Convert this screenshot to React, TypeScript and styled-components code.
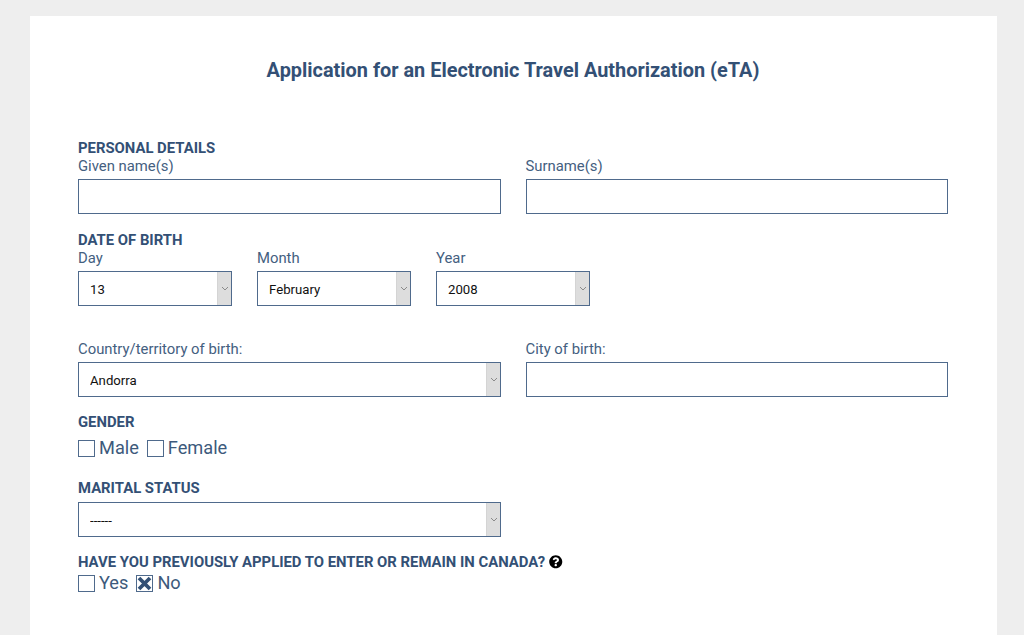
import React from 'react';
import styled, { createGlobalStyle } from 'styled-components';
import { FaQuestionCircle } from 'react-icons/fa';

const GlobalStyle = createGlobalStyle`
  html, body {
    margin: 0;
    height: 100%;
    overflow: hidden;
    background: #eeeeee;
    font-family: Roboto, "Liberation Sans", sans-serif;
  }
`;

const Page = styled.div`
  padding: 16px 27px 0 30px;
`;

const Card = styled.main`
  background: #ffffff;
  padding: 43px 49px 48px 48px;
  color: #335075;
`;

const Title = styled.h1`
  margin: 0 0 56px;
  font-size: 19.9px;
  line-height: 24px;
  font-weight: 700;
  text-align: center;
`;

const SectionTitle = styled.h2<{ $top?: number }>`
  margin: ${({ $top }) => $top ?? 0}px 0 0;
  font-size: 14.85px;
  line-height: 18px;
  font-weight: 700;
  text-transform: uppercase;
`;

const Row = styled.div<{ $top?: number }>`
  display: grid;
  grid-template-columns: 423px 422.5px;
  column-gap: 24.5px;
  margin-top: ${({ $top }) => $top ?? 0}px;
`;

const DateRow = styled.div`
  display: flex;
  gap: 25px;
`;

const Field = styled.label`
  display: block;
`;

const DateField = styled(Field)`
  width: 154px;
`;

const LabelText = styled.span`
  display: block;
  font-size: 14.85px;
  line-height: 18px;
  margin-bottom: 4px;
  color: #44607f;
`;

const TextInput = styled.input`
  display: block;
  box-sizing: border-box;
  width: 100%;
  height: 35px;
  border: 1px solid #4f6a8c;
  background: #fff;
  outline: none;
`;

const SelectBox = styled.div`
  display: flex;
  box-sizing: border-box;
  height: 35px;
  border: 1px solid #4f6a8c;
  background: #fff;
`;

const NativeSelect = styled.select`
  flex: 1;
  min-width: 0;
  appearance: none;
  border: none;
  outline: none;
  background: transparent;
  padding: 2px 11px 0;
  font-family: Roboto, "Liberation Sans", sans-serif;
  font-size: 13.2px;
  color: #111111;
`;

const ArrowCell = styled.span`
  flex: none;
  width: 13px;
  display: flex;
  align-items: center;
  justify-content: center;
  background: #dddddd;
  border-left: 1px solid #d4d4d4;
`;

const CheckRow = styled.div<{ $top: number }>`
  display: flex;
  align-items: center;
  gap: 8px;
  height: 18px;
  margin-top: ${({ $top }) => $top}px;
`;

const CheckLabel = styled.label`
  display: flex;
  align-items: center;
  gap: 4px;
  font-size: 18.2px;
  line-height: 18px;
  color: #3d5a7c;
`;

const CheckBox = styled.span`
  display: block;
  box-sizing: border-box;
  width: 17px;
  height: 17px;
  border: 1px solid #4f6a8c;
  background: #fff;
`;

const HelpRow = styled.span`
  display: inline-flex;
  align-items: center;
  gap: 4px;
`;

const Arrow = () => (
  <ArrowCell>
    <svg width="8" height="5" viewBox="0 0 8 5" fill="none">
      <path d="M1 1l3 3 3-3" stroke="#8a8a8a" strokeWidth="1" />
    </svg>
  </ArrowCell>
);

const Select = ({ value }: { value: string }) => (
  <SelectBox>
    <NativeSelect defaultValue={value}>
      <option>{value}</option>
    </NativeSelect>
    <Arrow />
  </SelectBox>
);

const Check = ({ label, checked }: { label: string; checked?: boolean }) => (
  <CheckLabel>
    <CheckBox>
      {checked && (
        <svg width="15" height="15" viewBox="0 0 15 15" style={{ display: 'block' }}>
          <path d="M2 2l11 11M13 2L2 13" stroke="#335075" strokeWidth="3.8" />
        </svg>
      )}
    </CheckBox>
    {label}
  </CheckLabel>
);

export default function App() {
  return (
    <Page>
      <GlobalStyle />
      <Card>
        <Title>Application for an Electronic Travel Authorization (eTA)</Title>

        <SectionTitle>Personal details</SectionTitle>
        <Row>
          <Field>
            <LabelText>Given name(s)</LabelText>
            <TextInput />
          </Field>
          <Field>
            <LabelText>Surname(s)</LabelText>
            <TextInput />
          </Field>
        </Row>

        <SectionTitle $top={17}>Date of birth</SectionTitle>
        <DateRow>
          <DateField>
            <LabelText>Day</LabelText>
            <Select value="13" />
          </DateField>
          <DateField>
            <LabelText>Month</LabelText>
            <Select value="February" />
          </DateField>
          <DateField>
            <LabelText>Year</LabelText>
            <Select value="2008" />
          </DateField>
        </DateRow>

        <Row $top={34}>
          <Field>
            <LabelText>Country/territory of birth:</LabelText>
            <Select value="Andorra" />
          </Field>
          <Field>
            <LabelText>City of birth:</LabelText>
            <TextInput />
          </Field>
        </Row>

        <SectionTitle $top={16}>Gender</SectionTitle>
        <CheckRow $top={8}>
          <Check label="Male" />
          <Check label="Female" />
        </CheckRow>

        <SectionTitle $top={22}>Marital status</SectionTitle>
        <Row $top={5}>
          <Select value="------" />
        </Row>

        <SectionTitle $top={16}>
          <HelpRow>
            Have you previously applied to enter or remain in Canada?
            <FaQuestionCircle size={13.5} color="#000" />
          </HelpRow>
        </SectionTitle>
        <CheckRow $top={3}>
          <Check label="Yes" />
          <Check label="No" checked />
        </CheckRow>
      </Card>
    </Page>
  );
}
